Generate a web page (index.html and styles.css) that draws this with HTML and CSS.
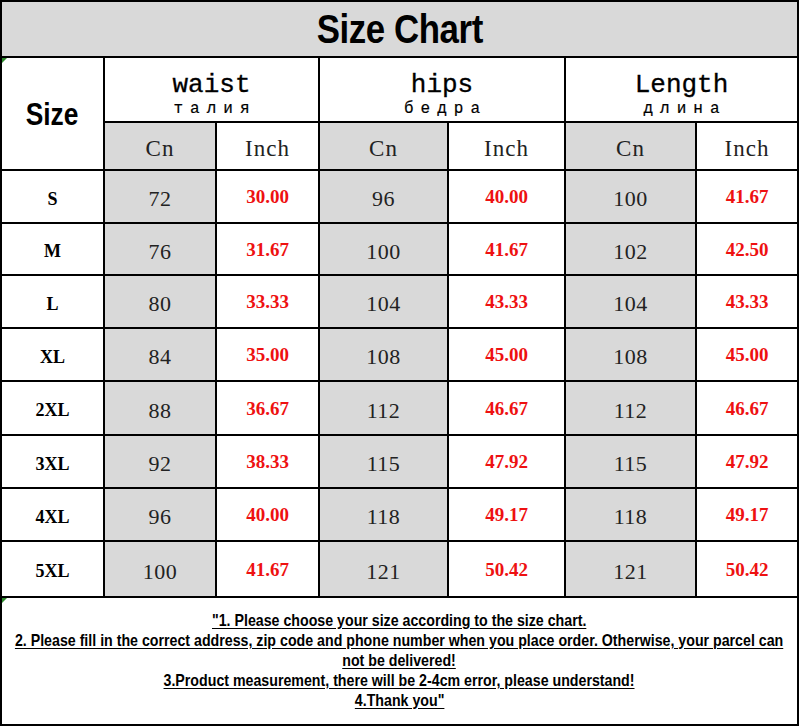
FILE: index.html
```html
<!DOCTYPE html>
<html lang="en">
<head>
<meta charset="utf-8">
<title>Size Chart</title>
<link rel="stylesheet" href="styles.css">
</head>
<body>
<div class="chart">
  <div class="title"><span class="narrow">Size Chart</span></div>

  <div class="size-head mark"><span class="narrow">Size</span></div>
  <div class="group"><span class="en">waist</span><span class="ru">талия</span></div>
  <div class="group"><span class="en">hips</span><span class="ru">бедра</span></div>
  <div class="group"><span class="en">Length</span><span class="ru">длина</span></div>

  <div class="sub gray">Cn</div><div class="sub">Inch</div>
  <div class="sub gray">Cn</div><div class="sub">Inch</div>
  <div class="sub gray">Cn</div><div class="sub">Inch</div>

  <div class="cell size">S</div><div class="cell cn gray">72</div><div class="cell in">30.00</div><div class="cell cn gray">96</div><div class="cell in">40.00</div><div class="cell cn gray">100</div><div class="cell in">41.67</div>
  <div class="cell size">M</div><div class="cell cn gray">76</div><div class="cell in">31.67</div><div class="cell cn gray">100</div><div class="cell in">41.67</div><div class="cell cn gray">102</div><div class="cell in">42.50</div>
  <div class="cell size">L</div><div class="cell cn gray">80</div><div class="cell in">33.33</div><div class="cell cn gray">104</div><div class="cell in">43.33</div><div class="cell cn gray">104</div><div class="cell in">43.33</div>
  <div class="cell size">XL</div><div class="cell cn gray">84</div><div class="cell in">35.00</div><div class="cell cn gray">108</div><div class="cell in">45.00</div><div class="cell cn gray">108</div><div class="cell in">45.00</div>
  <div class="cell size">2XL</div><div class="cell cn gray">88</div><div class="cell in">36.67</div><div class="cell cn gray">112</div><div class="cell in">46.67</div><div class="cell cn gray">112</div><div class="cell in">46.67</div>
  <div class="cell size">3XL</div><div class="cell cn gray">92</div><div class="cell in">38.33</div><div class="cell cn gray">115</div><div class="cell in">47.92</div><div class="cell cn gray">115</div><div class="cell in">47.92</div>
  <div class="cell size">4XL</div><div class="cell cn gray">96</div><div class="cell in">40.00</div><div class="cell cn gray">118</div><div class="cell in">49.17</div><div class="cell cn gray">118</div><div class="cell in">49.17</div>
  <div class="cell size">5XL</div><div class="cell cn gray">100</div><div class="cell in">41.67</div><div class="cell cn gray">121</div><div class="cell in">50.42</div><div class="cell cn gray">121</div><div class="cell in">50.42</div>

  <div class="notes mark">
    <span class="line">"1. Please choose your size according to the size chart.</span>
    <span class="line">2. Please fill in the correct address, zip code and phone number when you place order. Otherwise, your parcel can</span>
    <span class="line">not be delivered!</span>
    <span class="line">3.Product measurement, there will be 2-4cm error, please understand!</span>
    <span class="line">4.Thank you"</span>
  </div>
</div>
</body>
</html>
```

FILE: styles.css
```css
html, body {
  margin: 0;
  padding: 0;
  background: #ffffff;
}

.chart {
  display: grid;
  width: max-content;
  grid-template-columns: 101px 110px 101px 127px 115px 129px 100px;
  grid-template-rows: 54px 63px 46px 51px 50px 51px 51px 52px 51px 51px 54px 126px;
  gap: 2px;
  padding: 2px;
  background: #000000;
}

.chart > div {
  background: #ffffff;
  display: flex;
  align-items: center;
  justify-content: center;
  min-width: 0;
}

.chart > .gray {
  background: #d9d9d9;
}

.narrow {
  display: inline-block;
  transform: scaleX(0.85);
}

.title {
  grid-column: 1 / -1;
  background: #d9d9d9 !important;
  font-family: "Liberation Sans", sans-serif;
  font-weight: 700;
  font-size: 41px;
  letter-spacing: -0.5px;
  color: #000;
}

.size-head {
  grid-row: span 2;
  font-family: "Liberation Sans", sans-serif;
  font-weight: 700;
  font-size: 31px;
  padding-top: 2px;
  color: #000;
}

.group {
  grid-column: span 2;
  flex-direction: column;
  padding-top: 10px;
}

.group .en {
  font-family: "Liberation Mono", monospace;
  font-size: 26px;
  line-height: 28px;
  color: #000;
  -webkit-text-stroke: 0.3px #000;
}

.group .ru {
  font-family: "Liberation Mono", monospace;
  font-size: 16px;
  line-height: 20px;
  letter-spacing: 7px;
  margin-right: -7px;
  color: #000;
  -webkit-text-stroke: 0.2px #000;
}

.sub {
  font-family: "Liberation Serif", serif;
  font-size: 23px;
  letter-spacing: 1px;
  color: #222;
  padding-top: 6px;
}

.cell {
  padding-top: 5px;
}

.size {
  font-family: "Liberation Serif", serif;
  font-weight: 700;
  font-size: 18px;
  color: #000;
}

.cn {
  font-family: "Liberation Serif", serif;
  font-size: 22px;
  letter-spacing: 0.5px;
  color: #222;
}

.in {
  font-family: "Liberation Serif", serif;
  font-weight: 700;
  font-size: 19px;
  color: #ee1111;
  padding-top: 1px;
}

.notes {
  grid-column: 1 / -1;
  flex-direction: column;
  font-family: "Liberation Sans", sans-serif;
  font-weight: 700;
  font-size: 17px;
  line-height: 20px;
  color: #000;
}

.notes .line {
  display: inline-block;
  transform: scaleX(0.835);
  text-decoration: underline;
  text-underline-offset: 2px;
  white-space: nowrap;
}

.mark {
  position: relative;
}

.mark::before {
  content: "";
  position: absolute;
  left: 0;
  top: 0;
  border-top: 5px solid #2e8b2e;
  border-right: 5px solid transparent;
}
```
